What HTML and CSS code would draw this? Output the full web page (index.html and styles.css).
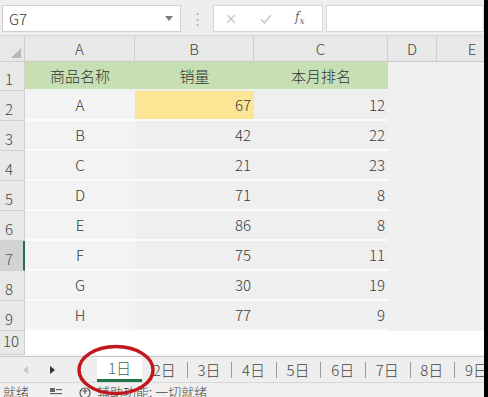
FILE: index.html
```html
<!DOCTYPE html>
<html lang="zh">
<head>
<meta charset="utf-8">
<link rel="stylesheet" href="styles.css">
</head>
<body>
<div class="app">
  <div class="topbar">
    <div class="namebox"><span>G7</span><span class="dd"></span></div>
    <div class="dots">⋮</div>
    <div class="fxbox">
      <svg class="ico" width="12" height="12" viewBox="0 0 12 12"><path d="M2 2L10 10M10 2L2 10" stroke="#c4c4c4" stroke-width="1.3"/></svg>
      <svg class="ico" width="14" height="12" viewBox="0 0 14 12"><path d="M2 6.5L5.5 10L12 2" fill="none" stroke="#c4c4c4" stroke-width="1.3"/></svg>
      <span class="fx"><i>f</i><sub>x</sub></span>
    </div>
    <div class="formula"></div>
  </div>
  <div class="grid">
    <div class="corner"><span class="tri"></span></div>
    <div class="ch">A</div><div class="ch">B</div><div class="ch">C</div><div class="ch">D</div><div class="ch last">E</div>

    <div class="rh">1</div>
    <div class="c hd">商品名称</div><div class="c hd">销量</div><div class="c hd">本月排名</div><div class="c g"></div><div class="c g"></div>

    <div class="rh">2</div>
    <div class="c ctr">A</div><div class="c num yel">67</div><div class="c num">12</div><div class="c g"></div><div class="c g"></div>
    <div class="rh">3</div>
    <div class="c ctr">B</div><div class="c num">42</div><div class="c num">22</div><div class="c g"></div><div class="c g"></div>
    <div class="rh">4</div>
    <div class="c ctr">C</div><div class="c num">21</div><div class="c num">23</div><div class="c g"></div><div class="c g"></div>
    <div class="rh">5</div>
    <div class="c ctr">D</div><div class="c num">71</div><div class="c num">8</div><div class="c g"></div><div class="c g"></div>
    <div class="rh">6</div>
    <div class="c ctr">E</div><div class="c num">86</div><div class="c num">8</div><div class="c g"></div><div class="c g"></div>
    <div class="rh sel">7</div>
    <div class="c ctr">F</div><div class="c num">75</div><div class="c num">11</div><div class="c g"></div><div class="c g"></div>
    <div class="rh">8</div>
    <div class="c ctr">G</div><div class="c num">30</div><div class="c num">19</div><div class="c g"></div><div class="c g"></div>
    <div class="rh">9</div>
    <div class="c ctr">H</div><div class="c num">77</div><div class="c num">9</div><div class="c g"></div><div class="c g"></div>
    <div class="rh r10">10</div>
    <div class="w"></div><div class="w"></div><div class="w"></div><div class="w"></div><div class="w"></div>
  </div>
  <div class="tabbar">
    <div class="nav"><span class="arr l"></span><span class="arr r"></span></div>
    <div class="tab active">1日</div>
    <div class="tab">2日</div>
    <div class="tab">3日</div>
    <div class="tab">4日</div>
    <div class="tab">5日</div>
    <div class="tab">6日</div>
    <div class="tab">7日</div>
    <div class="tab">8日</div>
    <div class="tab">9日</div>
  </div>
  <div class="status">
    <span class="st1">就绪</span>
    <svg class="sico" width="14" height="12" viewBox="0 0 14 12"><rect x="1" y="1" width="5" height="4" fill="#666"/><rect x="7" y="2" width="6" height="1.2" fill="#666"/><rect x="1" y="6" width="12" height="1.2" fill="#666"/></svg>
    <svg class="aico" width="16" height="14" viewBox="0 0 16 14"><circle cx="6" cy="7" r="5" fill="none" stroke="#555" stroke-width="1.2"/><path d="M6 3V8M3.5 5H8.5" stroke="#555" stroke-width="1.2"/></svg>
    <span class="st2">辅助功能: 一切就绪</span>
  </div>
  <svg class="ring" width="84" height="56" viewBox="0 0 84 56"><ellipse cx="42" cy="28" rx="37" ry="23.5" fill="none" stroke="#c3171e" stroke-width="3.5"/></svg>
</div>
</body>
</html>
```
FILE: styles.css
```css
html, body {
  margin: 0;
  padding: 0;
  background: #000;
}
body {
  width: 488px;
  height: 397px;
  overflow: hidden;
  font-family: "Noto Sans CJK SC", "Noto Sans", sans-serif;
  font-weight: 300;
  color: #3a3a3a;
}
.app {
  position: relative;
  width: 484px;
  height: 397px;
  overflow: hidden;
  background: #f1f1f1;
  display: flex;
  flex-direction: column;
}
.topbar {
  height: 36px;
  flex-shrink: 0;
  box-sizing: border-box;
  padding: 5px 0 3px 2px;
  display: flex;
  align-items: stretch;
  background: #eeeeee;
  border-bottom: 1px solid #dadada;
}
.namebox {
  width: 179px;
  box-sizing: border-box;
  background: #fff;
  border: 1px solid #cfcfcf;
  display: flex;
  align-items: center;
  justify-content: space-between;
  padding: 0 7px 0 6px;
  font-size: 15px;
  color: #333;
}
.dd {
  width: 0;
  height: 0;
  border-left: 4px solid transparent;
  border-right: 4px solid transparent;
  border-top: 5px solid #7a7a7a;
}
.dots {
  width: 32px;
  text-align: center;
  color: #b0b0b0;
  font-size: 15px;
  line-height: 26px;
}
.fxbox {
  width: 110px;
  box-sizing: border-box;
  background: #fff;
  border: 1px solid #d6d6d6;
  display: flex;
  align-items: center;
  gap: 22px;
  padding: 0 0 0 11px;
}
.fx {
  font-family: "DejaVu Serif", serif;
  font-size: 12px;
  color: #666;
}
.fx sub { font-size: 9px; font-style: italic; }
.formula {
  flex: 1;
  margin-left: 3px;
  background: #fff;
  border: 1px solid #d6d6d6;
}
.grid {
  display: grid;
  flex-shrink: 0;
  grid-template-columns: 25px 110px 119px 134px 49px 70px;
  grid-template-rows: 26px 29px repeat(8, 30px) 24px;
  background: #f0f0f0;
}
.corner {
  position: relative;
  background: #e8e8e8;
  border-right: 1px solid #cfcfcf;
  border-bottom: 1px solid #cfcfcf;
}
.tri {
  position: absolute;
  right: 3px;
  bottom: 3px;
  width: 0;
  height: 0;
  border-left: 10px solid transparent;
  border-bottom: 10px solid #b9b9b9;
}
.ch {
  background: #e8e8e8;
  border-right: 1px solid #cfcfcf;
  border-bottom: 1px solid #c8c8c8;
  text-align: center;
  font-size: 15px;
  line-height: 26px;
  color: #444;
}
.ch.last { border-right: none; }
.rh {
  background: #e8e8e8;
  border-right: 1px solid #cfcfcf;
  border-bottom: 1px solid #cfcfcf;
  box-sizing: border-box;
  font-size: 15px;
  display: flex;
  align-items: flex-end;
  padding-left: 5px;
  line-height: 22px;
  color: #444;
}
.rh.sel {
  background: #d3d3d3;
  border-right: 2px solid #217346;
  color: #555;
}
.rh.r10 { align-items: flex-start; line-height: 20px; padding-left: 3px; }
.c {
  font-size: 15px;
  line-height: 28px;
  border-bottom: 2px solid #fbfbfb;
  box-sizing: border-box;
  background: #efefef;
  white-space: nowrap;
}
.c.g {
  border-bottom: none;
  background: #f0f0f0;
}
.c.hd {
  background: #c6e0b4;
  border-bottom: 2px solid #eef3e9;
  text-align: center;
  color: #333;
}
.c.ctr { text-align: center; background: #f3f3f3; }
.c.num { text-align: right; padding-right: 3px; }
.c.yel { background: #fde596; }
.w { background: #fff; }
.tabbar {
  height: 27px;
  flex-shrink: 0;
  box-sizing: border-box;
  margin-top: 1px;
  border-top: 1px solid #c9c9c9;
  border-bottom: 1px solid #d8d8d8;
  background: #eeeeee;
  display: flex;
  align-items: stretch;
  font-size: 15px;
}
.nav {
  width: 97px;
  flex-shrink: 0;
  display: flex;
  align-items: center;
  padding-left: 23px;
  box-sizing: border-box;
  gap: 22px;
}
.arr {
  width: 0;
  height: 0;
  border-top: 4px solid transparent;
  border-bottom: 4px solid transparent;
}
.arr.l { border-right: 5px solid #c8c8c8; }
.arr.r { border-left: 5px solid #333; }
.tab {
  width: 44.6px;
  flex-shrink: 0;
  text-align: center;
  line-height: 25px;
  color: #444;
  position: relative;
}
.tab + .tab:not(.active)::before {
  content: "";
  position: absolute;
  left: 0;
  top: 5px;
  height: 16px;
  border-left: 1px solid #9a9a9a;
}
.tab:nth-child(3)::before { display: none; }
.tab.active {
  width: 45px;
  background: #fff;
  border-bottom: 3px solid #217346;
  line-height: 22px;
  color: #3a6e4c;
}
.status {
  height: 14px;
  flex-shrink: 0;
  background: #f0f0f0;
  display: flex;
  align-items: flex-start;
  font-size: 13px;
  line-height: 17px;
  color: #444;
  padding-left: 3px;
}
.sico { margin: 4px 0 0 20px; }
.aico { margin: 3px 0 0 16px; }
.st2 { margin-left: 2px; }
.ring {
  position: absolute;
  left: 74px;
  top: 342px;
}
```
